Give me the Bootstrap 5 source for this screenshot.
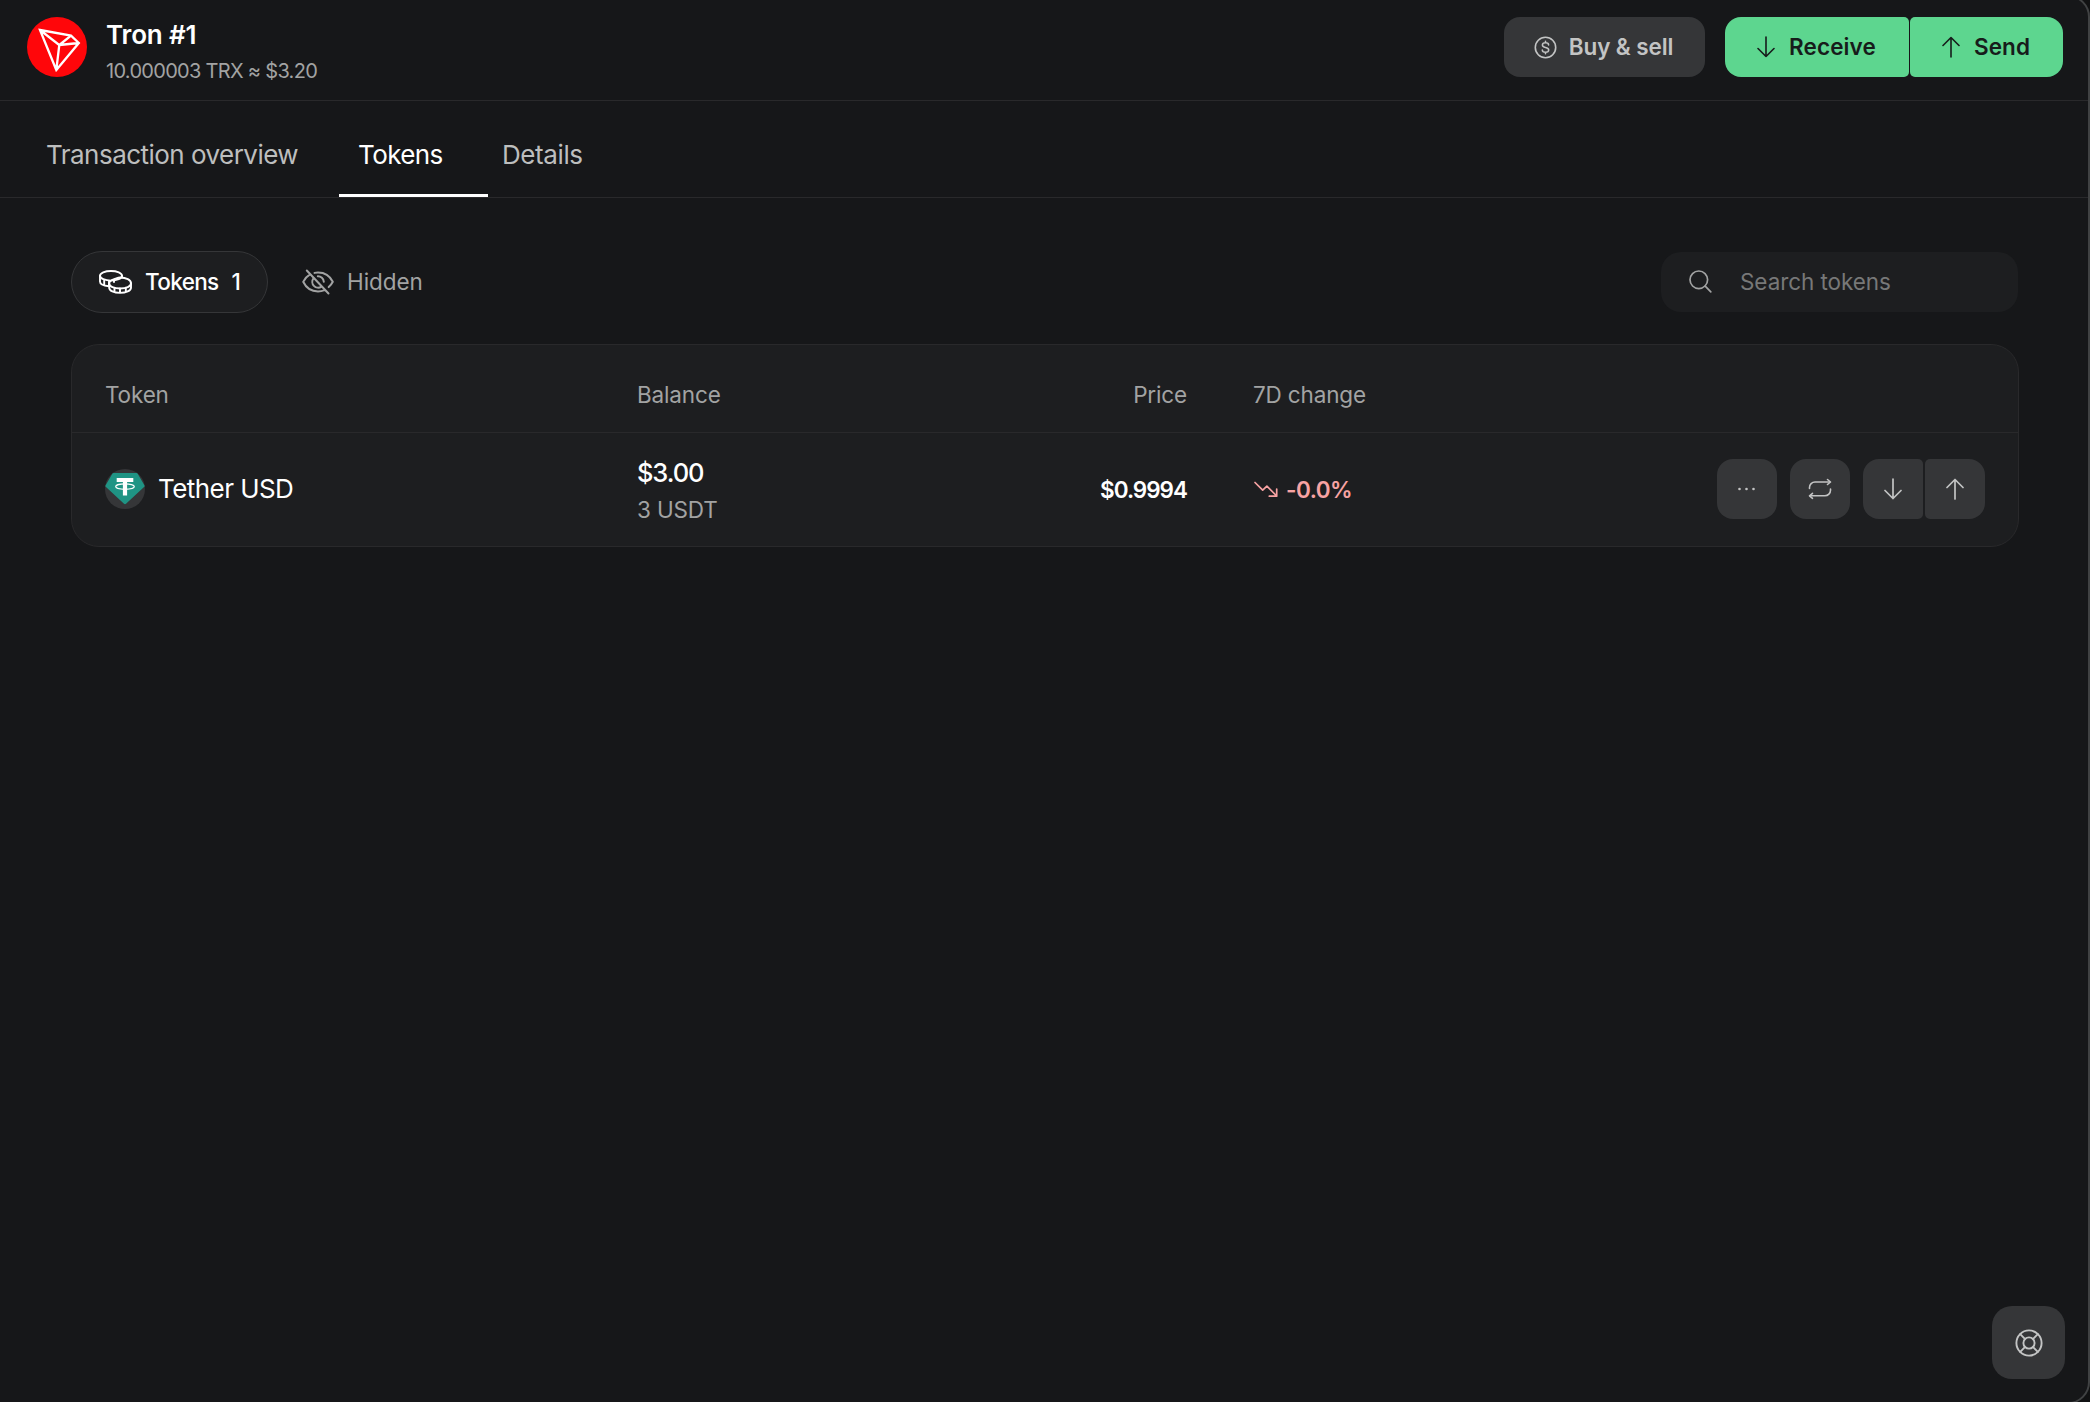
<!DOCTYPE html>
<html lang="en" data-bs-theme="dark">
<head>
<meta charset="utf-8">
<meta name="viewport" content="width=device-width, initial-scale=1">
<title>Tron #1 – Tokens</title>
<link href="https://cdn.jsdelivr.net/npm/bootstrap@5.3.0/dist/css/bootstrap.min.css" rel="stylesheet">
<style>
  body { background: #161719; color: #fff; font-family: Inter, "Liberation Sans", sans-serif; font-size: 22.5px; letter-spacing: -.15px; line-height: 37px; overflow: hidden; }
  svg { display: block; flex: none; fill: none; stroke: currentColor; stroke-linecap: round; stroke-linejoin: round; }
  .window-frame { position: fixed; top: -5px; right: 0; bottom: -2px; left: -30px; border: 2px solid #404243; border-radius: 22px; box-shadow: 0 0 0 20px #111213; pointer-events: none; }
  .muted { color: #a2a3a3; }

  .account-bar { height: 101px; padding: 0 27px; border-bottom: 1px solid #29292b; }
  .account-info { margin-left: 19px; padding-top: 5px; }
  .account-name { font-size: 26px; font-weight: 600; line-height: 36px; letter-spacing: -.15px; }
  .account-sum { font-size: 20px; line-height: 36px; letter-spacing: -.7px; }
  .account-icon, .account-actions { margin-top: -6px; }

  .act { height: 60px; border: 0; border-radius: 16px; font-size: 22.5px; font-weight: 600; letter-spacing: 0; padding: 0; color: #c3c4c4; background: #353638; }
  .act:hover { color: #fff; background: #3e3f40; }
  .act-go { color: #171c1b; background: #5dd68f; letter-spacing: .1px; }
  .act-go:hover { color: #171c1b; background: #6bdf9b; }
  .join-start { border-radius: 16px 5px 5px 16px; }
  .join-end { border-radius: 5px 16px 16px 5px; }
  .buy { width: 201px; gap: 12px; margin-right: 20px; padding-right: 2px; letter-spacing: -.1px; }
  .receive { width: 184px; gap: 14px; padding-right: 1px; }
  .send { width: 153px; gap: 14px; margin-left: 1px; padding-right: 1px; }

  .view-tabs { height: 97px; padding-left: 26px; border-bottom: 1px solid #29292b; font-size: 26px; letter-spacing: -.53px; }
  .view-tabs .nav-link { color: #bdbebe; padding: 13px 46px 0 20px; height: 96px; border-bottom: 3px solid transparent; display: flex; align-items: center; }
  .view-tabs .nav-link.active { color: #fff; border-color: #fff; width: 149px; letter-spacing: -.6px; }
  .view-tabs .tab-history { width: 313px; white-space: nowrap; }
  .view-tabs .nav-link.active { padding-left: 19px; }
  .view-tabs .tab-details { padding-left: 14px; letter-spacing: -.4px; }

  .page { padding: 53px 71px 0; }
  .pill { height: 62px; border: 1px solid transparent; border-radius: 31px; color: #a2a3a3; font-size: 22.5px; letter-spacing: -.05px; padding: 0 0 0 27px; }
  .pill span { margin-left: 13px; }
  .pill.active { width: 197px; color: #fff; background: #1d1e20; border-color: #353638; font-weight: 500; letter-spacing: -.65px; }
  .pill-hidden { padding-left: 33px; }
  .search-box { width: 357px; height: 60px; border-radius: 20px; background: #1d1e20; padding: 0 0 1px 28px; margin-right: 1px; }
  .search-box input { background: none; border: 0; outline: 0; color: #fff; padding: 0; margin-left: 28px; width: 240px; letter-spacing: -.07px; }
  .search-box input::placeholder { color: #777878; opacity: 1; }

  .token-card { margin-top: 31px; background: #1d1e20; border: 1px solid #29292b; border-radius: 28px; --bs-card-bg: #1d1e20; }
  .token-line { display: grid; grid-template-columns: 532px 300px 250px 66px 200px 1fr; padding: 0 33px; align-items: center; }
  .line-head { height: 88px; padding-top: 12px; border-bottom: 1px solid #29292b; }
  .line-body { height: 113px; padding-bottom: 2px; }
  .token-name { font-size: 26px; letter-spacing: -.56px; margin-left: 13px; }
  .fiat { font-size: 25.5px; font-weight: 500; letter-spacing: -1.1px; }
  .price { font-weight: 600; letter-spacing: -1px; padding-top: 2px; }
  .loss { color: #f8a3a3; font-weight: 600; letter-spacing: -.5px; gap: 8px; padding-top: 2px; }
  .sq { width: 60px; }
  .swap { margin: 0 13px; }
  .send-token { margin-left: 2px; }
  .help { position: fixed; left: 1992px; top: 1306px; width: 73px; height: 73px; border-radius: 20px; }
</style>
<script src="https://cdn.jsdelivr.net/npm/bootstrap@5.3.0/dist/js/bootstrap.bundle.min.js"></script>
</head>
<body>
<div class="window-frame"></div>

<header class="account-bar d-flex align-items-center">
  <svg class="account-icon" width="60" height="60" viewBox="0 0 60 60"><circle cx="30" cy="30" r="30" fill="#ff060a" stroke="none"/><path d="M13 13 44 18.600 51.800 26 29.300 53ZM13 13 32.300 28 29.300 53M32.300 28 44 18.600M32.300 28 51.800 26" stroke="#fff" stroke-width="2.300" stroke-linejoin="miter"/></svg>
  <div class="account-info">
    <div class="account-name">Tron #1</div>
    <div class="account-sum muted">10.000003 TRX ≈ $3.20</div>
  </div>
  <div class="account-actions d-flex ms-auto">
    <button class="act buy btn d-flex align-items-center justify-content-center">
      <svg width="23" height="23" viewBox="0 0 23 23" stroke-width="1.600"><circle cx="11.500" cy="11.500" r="10.200"/><path d="M14.600 8.900c0-1.300-1.300-2.100-3.100-2.100s-3.100.8-3.100 2.200c0 1.500 1.300 2.100 3.100 2.400s3.200 1 3.200 2.500-1.400 2.300-3.200 2.300-3.200-.9-3.200-2.300M11.500 5.300v1.500M11.500 16.200v1.500" stroke-width="1.500"/></svg>
      <span>Buy &amp; sell</span>
    </button>
    <button class="act act-go receive join-start btn d-flex align-items-center justify-content-center">
      <svg width="18" height="22" viewBox="0 0 18 22" stroke-width="1.600"><path d="M9 1v19.500M1 12.500l8 8 8-8"/></svg>
      <span>Receive</span>
    </button>
    <button class="act act-go send join-end btn d-flex align-items-center justify-content-center">
      <svg width="18" height="22" viewBox="0 0 18 22" stroke-width="1.600"><path d="M9 21V1.500M1 9.500l8-8 8 8"/></svg>
      <span>Send</span>
    </button>
  </div>
</header>

<nav class="view-tabs nav flex-nowrap">
  <a class="nav-link tab-history" href="#">Transaction overview</a>
  <a class="nav-link active" href="#" aria-current="page">Tokens</a>
  <a class="nav-link tab-details" href="#">Details</a>
</nav>

<main class="page">
  <div class="d-flex align-items-center">
    <button class="pill active btn d-flex align-items-center">
      <svg width="33" height="24" viewBox="0 0 33 24" stroke-width="1.900"><ellipse cx="12" cy="5.800" rx="11" ry="4.800"/><path d="M1 6v5.500c0 2.500 3.800 4.300 9 4.700M23 6v1.600M5.200 10.500v4.200M10 11.500v4M15 11v1"/><path d="M10.200 13.400c0-2.300 2-3.200 5-4.200 2.300-.8 4.200-1.700 6-1.700 6 0 10.800 2.600 10.800 5.800s-4.800 5.200-10.800 5.200-11-2-11-5.100Z"/><path d="M10.200 13.400v4.300c0 3 4.800 5.200 10.800 5.200s11-2.200 11-5.200v-4.400M15.500 18v4M21 18.500v4.300M26.800 17.700v4.200"/></svg>
      <span>Tokens</span><span>1</span>
    </button>
    <button class="pill pill-hidden btn d-flex align-items-center">
      <svg width="32" height="26" viewBox="0 0 32 26" stroke-width="2"><path d="M4.800 1.500 26.500 24.500M8 5.300C4.800 7.200 2.500 10 1.200 12.800 4 18.600 9.300 22.500 16 22.500c2.400 0 4.500-.5 6.500-1.400M12.500 3.900c1.100-.3 2.300-.4 3.500-.4 6.700 0 12 3.600 14.800 9.300-1 2-2.400 3.800-4.100 5.300"/><path d="M11.500 9.300a5.800 5.800 0 0 0 7.900 8.300M15.800 7.300a5.800 5.800 0 0 1 6 5.400"/></svg>
      <span>Hidden</span>
    </button>
    <label class="search-box d-flex align-items-center ms-auto">
      <svg width="23" height="23" viewBox="0 0 23 23" stroke-width="1.700" class="muted"><circle cx="9.800" cy="9.800" r="8.800"/><path d="m16.200 16.200 5.600 5.600"/></svg>
      <input type="text" placeholder="Search tokens">
    </label>
  </div>

  <section class="token-card card">
    <div class="token-line line-head muted">
      <span>Token</span><span>Balance</span><span class="text-end">Price</span><span></span><span>7D change</span>
    </div>
    <div class="token-line line-body">
      <div class="d-flex align-items-center">
        <svg width="40" height="40" viewBox="0 0 40 40"><circle cx="20" cy="20" r="20" fill="#353638" stroke="none"/><path d="M8.500 4h23q.8 0 1.200.7L39.500 16.500q.4.700-.2 1.300L21 34.800q-1 .9-2 0L.7 17.800q-.6-.6-.2-1.300L7.300 4.700Q7.700 4 8.500 4Z" fill="#1f9484" stroke="none"/><path d="M11.700 9h16.600v3.900h-6.200V26.500h-4.200V12.900h-6.200Z" fill="#fff" stroke="none"/><ellipse cx="20" cy="17.600" rx="9.300" ry="2.700" stroke="#fff" stroke-width="1.200"/></svg>
        <span class="token-name">Tether USD</span>
      </div>
      <div class="pt-1">
        <div class="fiat">$3.00</div>
        <div class="muted">3 USDT</div>
      </div>
      <div class="price text-end">$0.9994</div>
      <span></span>
      <div class="loss d-flex align-items-center">
        <svg width="25" height="17" viewBox="0 0 25 17" stroke-width="1.700"><path d="m2 1.500 7.700 7.700 4.200-4L23.700 15M23.700 8v7.200h-7.400"/></svg>
        <span>-0.0%</span>
      </div>
      <div class="d-flex justify-content-end">
        <button class="act sq btn d-flex align-items-center justify-content-center" aria-label="More"><svg width="18" height="4" viewBox="0 0 18 4"><g fill="currentColor" stroke="none"><circle cx="1.500" cy="2" r="1.300"/><circle cx="8.500" cy="2" r="1.300"/><circle cx="15.500" cy="2" r="1.300"/></g></svg></button>
        <button class="act sq swap btn d-flex align-items-center justify-content-center" aria-label="Swap"><svg width="24" height="22" viewBox="0 0 24 22" stroke-width="1.600"><path d="M1.500 10.500V9.500a5.500 5.500 0 0 1 5.500-5.500H21.500M22.500 11v1.300a5.500 5.500 0 0 1-5.500 5.500H2.500"/><path d="m19.500 1.500 3 2.500-3 2.500M4.500 15.300l-3 2.500 3 2.500"/></svg></button>
        <button class="act sq join-start btn d-flex align-items-center justify-content-center" aria-label="Receive"><svg width="18" height="22" viewBox="0 0 18 22" stroke-width="1.700"><path d="M9 1v19.500M1 12.500l8 8 8-8"/></svg></button>
        <button class="act sq join-end send-token btn d-flex align-items-center justify-content-center" aria-label="Send"><svg width="18" height="22" viewBox="0 0 18 22" stroke-width="1.700"><path d="M9 21V1.500M1 9.500l8-8 8 8"/></svg></button>
      </div>
    </div>
  </section>
</main>

<button class="act help btn d-flex align-items-center justify-content-center" aria-label="Help"><svg width="28" height="28" viewBox="0 0 28 28" stroke-width="1.900"><circle cx="14" cy="14" r="12.600"/><circle cx="14" cy="14" r="5.600"/><path d="m5.200 5.200 4.700 4.700M18.100 18.100l4.700 4.700M22.800 5.200l-4.700 4.700M9.900 18.100l-4.700 4.700"/></svg></button>
</body>
</html>
